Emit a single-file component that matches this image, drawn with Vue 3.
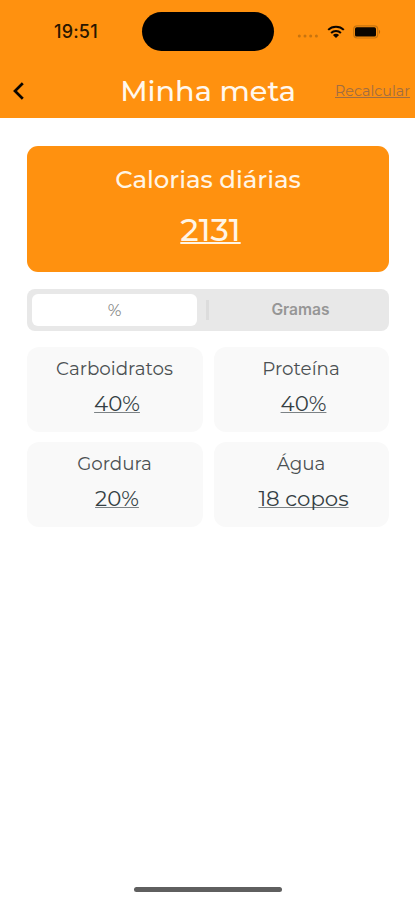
<template>
  <div class="screen">
    <header class="top">
      <div class="status-bar">
        <div class="status-time">19:51</div>
        <div class="island"></div>
        <div class="status-icons">
          <svg class="icon-dots" width="22" height="4" viewBox="0 0 22 4">
            <circle v-for="n in 4" :key="n" :cx="n * 5.7 - 3.4" cy="2" r="1.5" fill="#c8740f" />
          </svg>
          <svg class="icon-wifi" width="18" height="14" viewBox="0 0 18 14">
            <g fill="none" stroke="#0a0500" stroke-width="2">
              <path d="M1.2 4.9C5.4.7 12.6.7 16.8 4.9" />
              <path d="M4.1 8C6.8 5.3 11.2 5.3 13.9 8" />
            </g>
            <path d="M5.9 9.9C7.6 8.3 10.4 8.3 12.1 9.9L9 13Z" fill="#0a0500" />
          </svg>
          <svg class="icon-battery" width="29" height="14" viewBox="0 0 29 14">
            <rect x="0.7" y="0.8" width="24" height="12.2" rx="3.4" fill="none" stroke="#c8750f" stroke-width="1.2" />
            <rect x="2" y="2.3" width="21" height="9.2" rx="1.6" fill="#0a0500" />
            <path d="M26 4.8Q28.3 6.9 26 9Z" fill="#b96a10" />
          </svg>
        </div>
      </div>
      <nav class="nav-bar">
        <button class="btn-back" aria-label="Voltar">
          <svg width="12" height="20" viewBox="0 0 12 20">
            <path d="M10.8 2.2L3 10L10.8 17.8" fill="none" stroke="#0a0500" stroke-width="2.7" />
          </svg>
        </button>
        <h1 class="title">Minha meta</h1>
        <a class="link-recalc">Recalcular</a>
      </nav>
    </header>

    <main class="content">
      <section class="calorias">
        <div class="calorias-label">Calorias diárias</div>
        <div class="calorias-value">2131</div>
      </section>

      <div class="segment">
        <button
          v-for="op in opcoes"
          :key="op.id"
          class="segment-item"
          :class="[op.id, { active: modo === op.id }]"
          @click="modo = op.id"
        >{{ op.texto }}</button>
      </div>

      <section class="metas">
        <div v-for="meta in metas" :key="meta.id" class="meta-card">
          <div class="meta-nome">{{ meta.nome }}</div>
          <div class="meta-valor">{{ meta.valor }}</div>
        </div>
      </section>
    </main>

    <div class="home-indicator"></div>
  </div>
</template>

<script setup>
import { ref } from 'vue'

const modo = ref('percentual')

const opcoes = [
  { id: 'percentual', texto: '%' },
  { id: 'gramas', texto: 'Gramas' }
]

const metas = ref([
  { id: 'carboidratos', nome: 'Carboidratos', valor: '40%' },
  { id: 'proteina', nome: 'Proteína', valor: '40%' },
  { id: 'gordura', nome: 'Gordura', valor: '20%' },
  { id: 'agua', nome: 'Água', valor: '18 copos' }
])
</script>

<style>
body {
  background: #ffffff;
}
</style>

<style scoped>
.screen {
  box-sizing: border-box;
  display: flex;
  flex-direction: column;
  width: 415px;
  height: 900px;
  padding-bottom: 8px;
  background: #ffffff;
  font-family: Montserrat, Inter, sans-serif;
  overflow: hidden;
}
button {
  margin: 0;
  padding: 0;
  border: none;
  background: none;
  font-family: inherit;
}
.top {
  height: 118px;
  flex-shrink: 0;
  background: #ff910f;
}
.status-bar {
  display: grid;
  grid-template-columns: 142px 132px 1fr;
  height: 63px;
  align-items: center;
}
.status-time {
  padding-left: 54px;
  font-family: Inter, sans-serif;
  font-size: 18px;
  font-weight: 500;
  letter-spacing: 0.2px;
  color: #2a1600;
}
.island {
  height: 39px;
  border-radius: 20px;
  background: #000000;
}
.status-icons {
  display: flex;
  align-items: center;
  padding-left: 23px;
}
.icon-dots {
  margin-top: 9px;
}
.icon-wifi {
  margin-left: 7.5px;
}
.icon-battery {
  margin-left: 8.5px;
}
.nav-bar {
  display: grid;
  grid-template-columns: 90px 1fr 90px;
  height: 55px;
  align-items: center;
}
.btn-back {
  display: flex;
  padding-left: 12px;
}
.title {
  margin: 0;
  padding-top: 1px;
  padding-left: 1px;
  font-size: 28.7px;
  font-weight: 500;
  line-height: 54px;
  text-align: center;
  white-space: nowrap;
  color: #fff8ee;
}
.link-recalc {
  justify-self: end;
  padding-top: 1px;
  padding-right: 5px;
  font-size: 14.3px;
  color: #a16d42;
  text-decoration: underline;
  text-decoration-skip-ink: none;
}
.content {
  display: flex;
  flex-direction: column;
  padding: 28px 26px 0 27px;
}
.calorias {
  box-sizing: border-box;
  height: 126px;
  padding-top: 14px;
  border-radius: 11px;
  background: #ff910f;
  color: #fff5e6;
  text-align: center;
}
.calorias-label {
  font-size: 24.4px;
  font-weight: 500;
  line-height: 38px;
}
.calorias-value {
  margin-top: 11px;
  padding-left: 5px;
  font-size: 32px;
  font-weight: 500;
  line-height: 42px;
  text-decoration: underline;
  text-decoration-thickness: 2px;
  text-underline-offset: 1px;
}
.segment {
  box-sizing: border-box;
  display: flex;
  height: 42px;
  margin-top: 17px;
  padding: 5px;
  border-radius: 8px;
  background: #e8e8e8;
}
.segment-item {
  width: 165px;
  border-radius: 6px;
  font-size: 16.5px;
  line-height: 32px;
  color: #858585;
}
.segment-item.gramas {
  flex: 1;
  padding-left: 20px;
  font-family: Inter, sans-serif;
  font-size: 15.6px;
  font-weight: 600;
  color: #969696;
}
.segment-item.active {
  background: #ffffff;
}
/* divisor entre as duas opções */
.segment-item.percentual + .segment-item::before {
  content: '';
  float: left;
  width: 3px;
  height: 20px;
  margin: 6px 0 0 -11px;
  background: #dcdcdc;
}
.metas {
  display: grid;
  grid-template-columns: 176px 175px;
  column-gap: 11px;
  row-gap: 10px;
  margin-top: 16px;
}
.meta-card {
  box-sizing: border-box;
  height: 85px;
  padding-top: 8px;
  border-radius: 12px;
  background: #f9f9f9;
  color: #4b5052;
  text-align: center;
}
.meta-nome {
  padding-right: 1px;
  font-size: 18.3px;
  line-height: 28px;
}
.meta-valor {
  margin-top: 5px;
  padding-left: 4px;
  font-size: 21.3px;
  line-height: 30px;
  color: #353f44;
  text-decoration: underline;
  text-decoration-color: #7c8285;
  text-decoration-thickness: 1px;
  text-decoration-skip-ink: none;
  text-underline-offset: 1px;
}
.home-indicator {
  width: 148px;
  height: 5px;
  margin: auto auto 0 134px;
  border-radius: 3px;
  background: #5f5f5f;
}
</style>
